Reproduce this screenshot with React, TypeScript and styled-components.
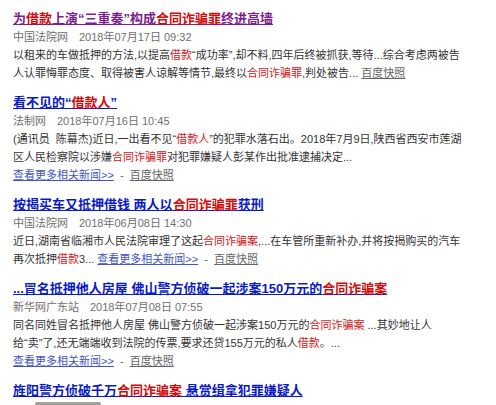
import React from "react"
import styled, { createGlobalStyle } from "styled-components"

type Seg = { t: string; hl?: boolean; more?: boolean; cache?: boolean; sep?: boolean }

type NewsItem = {
  title: Seg[]
  visited?: boolean
  source: string
  time: string
  lines: Seg[][]
  thumb?: boolean
}

const more: Seg[] = [{ t: "查看更多相关新闻>>", more: true }, { t: "  -  ", sep: true }, { t: "百度快照", cache: true }]

const news: NewsItem[] = [
  {
    visited: true,
    title: [{ t: "为" }, { t: "借款", hl: true }, { t: "上演“三重奏”构成" }, { t: "合同诈骗罪", hl: true }, { t: "终进高墙" }],
    source: "中国法院网",
    time: "2018年07月17日 09:32",
    lines: [
      [{ t: "以租来的车做抵押的方法,以提高" }, { t: "借款", hl: true }, { t: "“成功率”,却不料,四年后终被抓获,等待...综合考虑两被告" }],
      [{ t: "人认罪悔罪态度、取得被害人谅解等情节,最终以" }, { t: "合同诈骗罪", hl: true }, { t: ",判处被告... " }, { t: "百度快照", cache: true }],
    ],
  },
  {
    title: [{ t: "看不见的“" }, { t: "借款人", hl: true }, { t: "”" }],
    source: "法制网",
    time: "2018年07月16日 10:45",
    lines: [
      [{ t: "(通讯员  陈幕杰)近日,一出看不见“" }, { t: "借款人", hl: true }, { t: "”的犯罪水落石出。2018年7月9日,陕西省西安市莲湖" }],
      [{ t: "区人民检察院以涉嫌" }, { t: "合同诈骗罪", hl: true }, { t: "对犯罪嫌疑人彭某作出批准逮捕决定..." }],
      more,
    ],
  },
  {
    title: [{ t: "按揭买车又抵押借钱 两人以" }, { t: "合同诈骗罪", hl: true }, { t: "获刑" }],
    source: "中国法院网",
    time: "2018年06月08日 14:30",
    lines: [
      [{ t: "近日,湖南省临湘市人民法院审理了这起" }, { t: "合同诈骗案", hl: true }, { t: ",...在车管所重新补办,并将按揭购买的汽车" }],
      [{ t: "再次抵押" }, { t: "借款", hl: true }, { t: "3... " }, ...more],
    ],
  },
  {
    title: [{ t: "...冒名抵押他人房屋 佛山警方侦破一起涉案150万元的" }, { t: "合同诈骗案", hl: true }],
    source: "新华网广东站",
    time: "2018年07月08日 07:55",
    lines: [
      [{ t: "同名同姓冒名抵押他人房屋 佛山警方侦破一起涉案150万元的" }, { t: "合同诈骗案", hl: true }, { t: " ...其妙地让人" }],
      [{ t: "给“卖”了,还无端端收到法院的传票,要求还贷155万元的私人" }, { t: "借款", hl: true }, { t: "。..." }],
      more,
    ],
  },
  {
    title: [{ t: "旌阳警方侦破千万" }, { t: "合同诈骗案", hl: true }, { t: " 悬赏缉拿犯罪嫌疑人" }],
    source: "",
    time: "",
    lines: [],
    thumb: true,
  },
]

const GlobalStyle = createGlobalStyle`
  html, body {
    margin: 0;
    padding: 0;
    background: #fff;
  }
  body {
    font-family: "Liberation Sans", Arial, "Noto Sans CJK SC", sans-serif;
  }
`

const S = {
  List: styled.div`
    display: flex;
    flex-direction: column;
    gap: 12px;
    padding: 10px 0 0 13px;
    width: 483px;
  `,
  Item: styled.div`
    display: flex;
    flex-direction: column;
  `,
  Title: styled.a<{ $visited?: boolean }>`
    display: block;
    height: 18px;
    font-size: 13px;
    font-weight: bold;
    line-height: 18px;
    color: ${(p) => (p.$visited ? "#7b1e8e" : "#0a1bc6")};
    text-decoration: underline;
    white-space: nowrap;
    cursor: pointer;
  `,
  TitleHl: styled.span`
    color: #d10c0c;
  `,
  Meta: styled.div`
    display: flex;
    gap: 11px;
    height: 18px;
    font-size: 11px;
    line-height: 18px;
    color: #6f6f6f;
  `,
  Line: styled.div`
    height: 18px;
    font-size: 11px;
    line-height: 18px;
    color: #333;
    white-space: pre;
  `,
  Hl: styled.span`
    color: #d02020;
  `,
  More: styled.a`
    color: #4455c4;
    text-decoration: underline;
  `,
  Sep: styled.span`
    color: #666;
  `,
  Cache: styled.a`
    color: #666;
    text-decoration: underline;
  `,
  Thumb: styled.div`
    flex: none;
    margin: 2px 0 0 22px;
    width: 66px;
    height: 60px;
    border-radius: 2px;
    background: linear-gradient(#a9a4a2, #7a7472 20%, #5d5856);
  `,
}

const renderSeg = (s: Seg, i: number) => {
  if (s.hl) return <S.Hl key={i}>{s.t}</S.Hl>
  if (s.more) return <S.More key={i}>{s.t}</S.More>
  if (s.sep) return <S.Sep key={i}>{s.t}</S.Sep>
  if (s.cache) return <S.Cache key={i}>{s.t}</S.Cache>
  return <React.Fragment key={i}>{s.t}</React.Fragment>
}

export default function App() {
  return (
    <>
      <GlobalStyle />
      <S.List>
        {news.map((item, index) => (
          <S.Item key={index}>
            <S.Title $visited={item.visited}>
              {item.title.map((s, i) => (s.hl ? <S.TitleHl key={i}>{s.t}</S.TitleHl> : <React.Fragment key={i}>{s.t}</React.Fragment>))}
            </S.Title>
            {item.source && (
              <S.Meta>
                <span>{item.source}</span>
                <span>{item.time}</span>
              </S.Meta>
            )}
            {item.lines.map((line, li) => (
              <S.Line key={li}>{line.map(renderSeg)}</S.Line>
            ))}
            {item.thumb && <S.Thumb />}
          </S.Item>
        ))}
      </S.List>
    </>
  )
}
